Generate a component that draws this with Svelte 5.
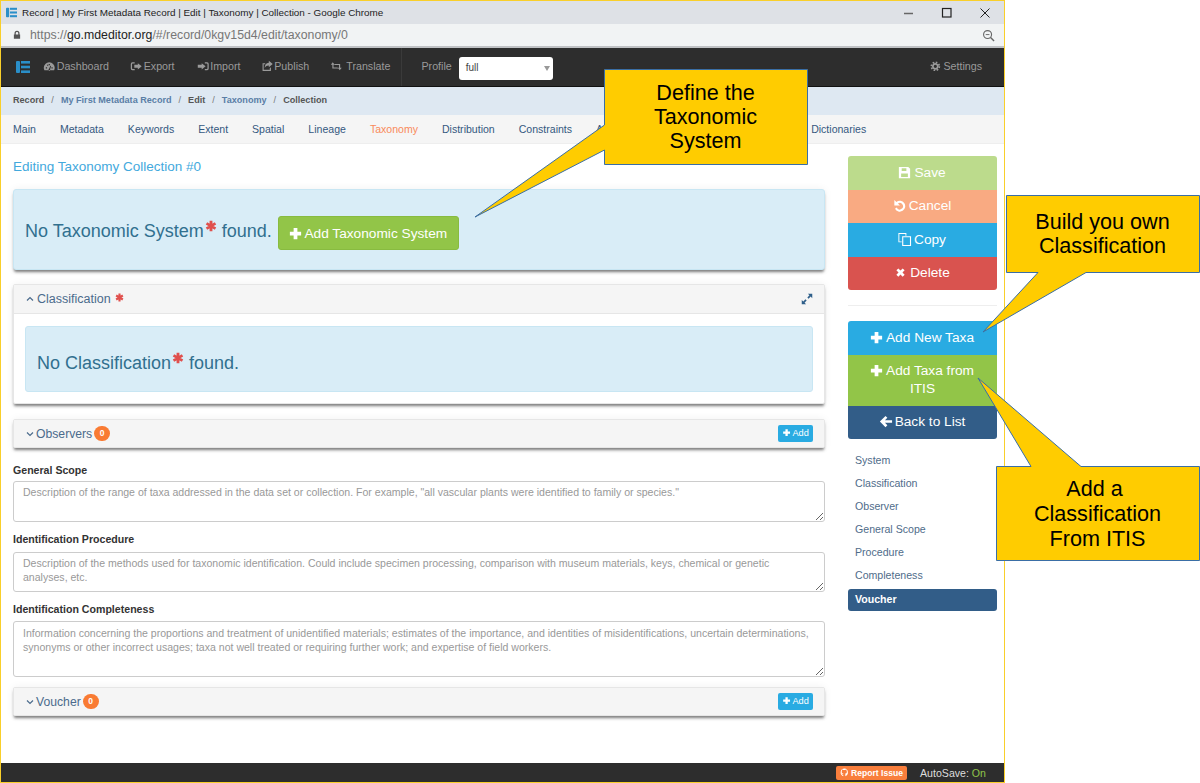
<script>
	const icons = {
		plus: 'M6 2h4v4h4v4h-4v4H6v-4H2V6h4z',
		times: 'M3.600 5.700 5.700 3.600 8 5.900l2.300-2.300 2.100 2.100L10.100 8l2.300 2.300-2.100 2.100L8 10.100l-2.300 2.300-2.100-2.100L5.900 8z',
		left: 'M8 2l2 2-2.600 2.600H15v2.800H7.400L10 12l-2 2-6-6z',
		save: 'M2 2h10l2 2v10H2zM5 3.400V6.500h5V3.400zM4.400 9v3.800h7.200V9z',
		undo: 'M2.500 2 4.700 4.200A5.800 5.800 0 1 1 3.200 11.500l1.800-1.300A3.500 3.500 0 1 0 6.300 5.800L8.500 8H2.500z',
		copy: 'M1.500 1h8.500v3H9V2H2.500v8H5v1H1.500zM5.500 4.500h9.500V15H5.500zM6.700 5.700v8.100H13.800V5.700z',
		dash: 'M8 3a7 7 0 0 0-7 7c0 1.200.3 2.300.8 3h12.400c.5-.7.8-1.800.8-3a7 7 0 0 0-7-7zM7.200 5h1.600v1.600H7.200zM3.600 9.200h1.600v1.600H3.600zm7.200 0h1.600v1.600h-1.600zM5 6.400l1-.6.9 1-1 .9zm2.500 5.400 2-4.600.9.4-1.400 4.400a1.200 1.200 0 1 1-1.500-.2z',
		exp: 'M6 3H3a2 2 0 0 0-2 2v6a2 2 0 0 0 2 2h3v-1.600H3.400a.8.8 0 0 1-.8-.8V5.400a.8.8 0 0 1 .8-.8H6zM10 4l5 4-5 4V9.800H5.500V6.200H10z',
		imp: 'M10 3h3a2 2 0 0 1 2 2v6a2 2 0 0 1-2 2h-3v-1.600h2.600a.8.8 0 0 0 .8-.8V5.400a.8.8 0 0 0-.8-.8H10zM6 4l5 4-5 4V9.800H1V6.200h5z',
		pub: 'M10 1l5 4.200-5 4.200V7C7 7 5.500 8 4.800 10.500 4.600 6.500 6.500 3.800 10 3.600zM2 4h3.400v1.500H3.400v7.100h7.800V10.400l1.500-1V14H2z',
		trans: 'M1 6 3.500 3 6 6H4.500v3.500H9.500L11 11H3V6zM15 10l-2.500 3L10 10h1.500V6.500H6.500L5 5h8v5z',
		expand: 'M9 2h5v5l-1.800-1.800L9.800 7.600 8.400 6.200l2.400-2.400zM7 14H2V9l1.800 1.800 2.400-2.400 1.400 1.400-2.400 2.400z',
		lock: 'M4 7V5a4 4 0 0 1 8 0v2h1v7H3V7zm2 0h4V5a2 2 0 0 0-4 0z',
		git: 'M8 1a7 7 0 0 0-2.200 13.600v-2.300c-2 .4-2.400-1-2.400-1-.3-.8-.8-1-.8-1-.6-.5 0-.5 0-.5.7 0 1.100.7 1.100.7.6 1.100 1.700.8 2.100.6 0-.5.2-.8.4-1-1.600-.2-3.200-.8-3.200-3.400 0-.8.3-1.400.7-1.900-.1-.2-.3-.9.1-1.900 0 0 .6-.2 2 .7a7 7 0 0 1 3.600 0c1.400-.9 2-.7 2-.7.4 1 .2 1.700.1 1.900.5.5.7 1.100.7 1.900 0 2.600-1.600 3.200-3.200 3.400.3.2.5.7.5 1.300v3.100A7 7 0 0 0 8 1z'
	}
	const tabs = ['Main', 'Metadata', 'Keywords', 'Extent', 'Spatial', 'Lineage', 'Taxonomy', 'Distribution', 'Constraints', 'Associated', 'Documents', 'Funding', 'Dictionaries']
	const menu = [
		{ name: 'Dashboard', icon: 'dash' },
		{ name: 'Export', icon: 'exp' },
		{ name: 'Import', icon: 'imp' },
		{ name: 'Publish', icon: 'pub' },
		{ name: 'Translate', icon: 'trans' }
	]
	const sections = ['System', 'Classification', 'Observer', 'General Scope', 'Procedure', 'Completeness', 'Voucher']
</script>

{#snippet ic(name)}
	<svg class="ic" viewBox="0 0 16 16"><path fill="currentColor" fill-rule="evenodd" d={icons[name]} /></svg>
{/snippet}

{#snippet star()}
	<svg class="star" viewBox="0 0 16 16"><path d="M8 1v14M2 4.500l12 7M14 4.500l-12 7" stroke="currentColor" stroke-width="3.800" /></svg>
{/snippet}

{#snippet gear()}
	<svg class="ic" viewBox="0 0 16 16">
		<circle cx="8" cy="8" r="6" fill="none" stroke="currentColor" stroke-width="2.600" stroke-dasharray="2.400 2.300" />
		<circle cx="8" cy="8" r="3.700" fill="none" stroke="currentColor" stroke-width="2.600" />
	</svg>
{/snippet}

{#snippet logo()}
	<svg class="logo" viewBox="0 0 14 14">
		<rect x="0" y="1" width="4" height="12" rx="1" fill="#2a8fc9" />
		<rect x="5" y="1" width="9" height="2.600" fill="#2a8fc9" />
		<rect x="5" y="5.700" width="9" height="2.600" fill="#2a8fc9" />
		<rect x="5" y="10.400" width="9" height="2.600" fill="#2a8fc9" />
	</svg>
{/snippet}

<div class="window">
	<div class="titlebar">
		{@render logo()}
		<span class="title">Record | My First Metadata Record | Edit | Taxonomy | Collection - Google Chrome</span>
		<div class="winbtns">
			<svg viewBox="0 0 12 12"><path d="M1 6.500h9" stroke="#666" stroke-width="1.500" /></svg>
			<svg viewBox="0 0 12 12"><rect x="1.500" y="1.500" width="8.500" height="8.500" fill="none" stroke="#222" stroke-width="1.200" /></svg>
			<svg viewBox="0 0 12 12"><path d="M1.500 1.500l9 9M10.500 1.500l-9 9" stroke="#222" stroke-width="1" /></svg>
		</div>
	</div>
	<div class="addr">
		{@render ic('lock')}
		<span class="url"><i>https://</i>go.mdeditor.org<i>/#/record/0kgv15d4/edit/taxonomy/0</i></span>
		<svg class="zoomout" viewBox="0 0 14 14"><circle cx="6" cy="6" r="4.300" fill="none" stroke="#666" stroke-width="1.200" /><path d="M9.200 9.200l3.800 3.800" stroke="#666" stroke-width="1.500" /><path d="M4 6h4" stroke="#666" /></svg>
	</div>

	<nav class="topnav">
		<span class="brand">{@render logo()}</span>
		{#each menu as m}
			<span class="menu-item {m.icon}">{@render ic(m.icon)}{m.name}</span>
		{/each}
		<span class="divider"></span>
		<span class="profile">Profile</span>
		<span class="select">full<b></b></span>
		<span class="settings">{@render gear()}Settings</span>
	</nav>

	<div class="crumbs">
		<span>Record</span><em>/</em><a>My First Metadata Record</a><em>/</em><span>Edit</span><em>/</em><a>Taxonomy</a><em>/</em><span>Collection</span>
	</div>

	<div class="tabs">
		{#each tabs as t}
			<span class:current={t === 'Taxonomy'}>{t}</span>
		{/each}
	</div>

	<div class="main">
		<div class="left">
			<h3>Editing Taxonomy Collection #0</h3>

			<div class="alert top-alert">
				<span>No Taxonomic System<span class="req">{@render star()}</span> found.</span>
				<button class="add-system">{@render ic('plus')}Add Taxonomic System</button>
			</div>

			<section class="card open">
				<header>
					<svg class="chev" viewBox="0 0 10 10"><path d="M2 6.500l3-3 3 3" fill="none" stroke="currentColor" stroke-width="1.200" /></svg>
					<span>Classification</span>
					<span class="req small">{@render star()}</span>
					<span class="expand">{@render ic('expand')}</span>
				</header>
				<div class="body">
					<div class="alert"><span>No Classification<span class="req">{@render star()}</span> found.</span></div>
				</div>
			</section>

			<section class="card closed">
				<header>
					<svg class="chev" viewBox="0 0 10 10"><path d="M2 3.500l3 3 3-3" fill="none" stroke="currentColor" stroke-width="1.200" /></svg>
					<span>Observers</span>
					<span class="count">0</span>
					<button class="add">{@render ic('plus')}Add</button>
				</header>
			</section>

			<label class="first">General Scope</label>
			<textarea class="h41" placeholder={'Description of the range of taxa addressed in the data set or collection. For example, "all vascular plants were identified to family or species."'}></textarea>

			<label class="second">Identification Procedure</label>
			<textarea class="h40" placeholder="Description of the methods used for taxonomic identification. Could include specimen processing, comparison with museum materials, keys, chemical or genetic analyses, etc."></textarea>

			<label>Identification Completeness</label>
			<textarea class="h56" placeholder="Information concerning the proportions and treatment of unidentified materials; estimates of the importance, and identities of misidentifications, uncertain determinations, synonyms or other incorrect usages; taxa not well treated or requiring further work; and expertise of field workers."></textarea>

			<section class="card closed voucher">
				<header>
					<svg class="chev" viewBox="0 0 10 10"><path d="M2 3.500l3 3 3-3" fill="none" stroke="currentColor" stroke-width="1.200" /></svg>
					<span>Voucher</span>
					<span class="count">0</span>
					<button class="add">{@render ic('plus')}Add</button>
				</header>
			</section>
		</div>

		<aside class="right">
			<div class="stack">
				<button class="save">{@render ic('save')}Save</button>
				<button class="cancel">{@render ic('undo')}Cancel</button>
				<button class="blue">{@render ic('copy')}Copy</button>
				<button class="del">{@render ic('times')}Delete</button>
			</div>
			<hr />
			<div class="stack">
				<button class="blue">{@render ic('plus')}Add New Taxa</button>
				<button class="green">{@render ic('plus')}Add Taxa from ITIS</button>
				<button class="navy">{@render ic('left')}Back to List</button>
			</div>
			<ul>
				{#each sections as s}
					<li class:active={s === 'Voucher'}>{s}</li>
				{/each}
			</ul>
		</aside>
	</div>

	<footer>
		<span class="report">{@render ic('git')}Report Issue</span>
		<span class="autosave">AutoSave: <b>On</b></span>
	</footer>
</div>

<svg class="shapes" viewBox="0 0 1200 783">
	<path d="M604.500 69.500H807.500V164.500H604.500V150L475 217 604.500 125Z" />
	<path d="M1006.500 195.500H1199.500V272.500H1086L983 332 1038 272.500H1006.500Z" />
	<path d="M996.500 466.500H1031L978 378 1081 466.500H1199.500V560.500H996.500Z" />
</svg>
<div class="note n1">Define the<br />Taxonomic<br />System</div>
<div class="note n2">Build you own<br />Classification</div>
<div class="note n3">Add a&nbsp;<br />Classification<br />From ITIS</div>

<style>
	:global(body) {
		margin: 0;
		background: #fff;
		font-family: "Liberation Sans", Arial, sans-serif;
	}
	.window {
		box-sizing: border-box;
		width: 1005px;
		height: 783px;
		border: 1px solid #f9cf2a;
		display: flex;
		flex-direction: column;
		background: #fff;
		overflow: hidden;
	}
	.ic {
		width: 1em;
		height: 1em;
		vertical-align: -0.12em;
		margin-right: 0.25em;
	}

	.titlebar {
		height: 23px;
		background: #dee1e6;
		display: flex;
		align-items: center;
		padding-left: 5px;
		flex: none;
	}
	.logo {
		width: 11px;
		height: 11px;
	}
	.title {
		margin-left: 5px;
		font-size: 9.900px;
		color: #222;
	}
	.winbtns {
		margin-left: auto;
		display: flex;
		gap: 26px;
		padding-right: 13px;
	}
	.winbtns svg {
		width: 12px;
		height: 12px;
	}
	.addr {
		height: 22px;
		background: #f1f3f4;
		border-bottom: 2px solid #bfc1c4;
		display: flex;
		align-items: center;
		padding-left: 11px;
		font-size: 12.300px;
		color: #555;
		flex: none;
	}
	.addr .ic {
		font-size: 10px;
		margin-right: 8px;
	}
	.url {
		color: #222;
	}
	.url i {
		font-style: normal;
		color: #777;
	}
	.zoomout {
		width: 13px;
		height: 13px;
		margin-left: auto;
		margin-right: 9px;
	}

	.topnav {
		height: 38px;
		background: #2d2d2d;
		border-bottom: 1px solid #111;
		display: flex;
		align-items: center;
		font-size: 10.700px;
		color: #9a9a9a;
		flex: none;
	}
	.brand {
		margin-left: 15px;
		display: flex;
	}
	.brand .logo {
		width: 14px;
		height: 14px;
	}
	.menu-item {
		margin-left: 13px;
		margin-right: 8px;
		padding-bottom: 2px;
		white-space: nowrap;
	}
	.menu-item .ic {
		width: 12.500px;
		height: 12.500px;
		vertical-align: -3px;
		margin-right: 1.200px;
	}
	.imp {
		margin-left: 14px;
	}
	.pub {
		margin-left: 12px;
	}
	.menu-item.trans .ic {
		margin-right: 3.500px;
	}
	.divider {
		width: 1px;
		height: 38px;
		background: #3a3a3a;
		margin-left: 3px;
	}
	.profile {
		margin-left: 19px;
		padding-bottom: 2px;
	}
	.select {
		box-sizing: border-box;
		width: 94px;
		height: 23px;
		margin-left: 7px;
		margin-top: 2px;
		background: #fff;
		border-radius: 3px;
		color: #444;
		font-size: 10px;
		line-height: 21px;
		padding-left: 7px;
		position: relative;
	}
	.select b {
		position: absolute;
		right: 3px;
		top: 9px;
		border: 3px solid transparent;
		border-top: 5px solid #999;
		border-bottom: 0;
	}
	.settings {
		margin-left: auto;
		margin-right: 22px;
		padding-bottom: 2px;
	}

	.crumbs {
		height: 28px;
		box-sizing: border-box;
		padding-bottom: 2px;
		background: #dee8f2;
		display: flex;
		align-items: center;
		padding-left: 12px;
		font-size: 9.100px;
		font-weight: bold;
		color: #555;
		flex: none;
	}
	.crumbs a {
		color: #5a7ea6;
	}
	.crumbs em {
		font-style: normal;
		font-weight: normal;
		margin: 0 7px;
		color: #777;
	}

	.tabs {
		height: 29px;
		box-sizing: border-box;
		background: #f5f5f5;
		border-bottom: 1px solid #eee;
		display: flex;
		align-items: center;
		gap: 24px;
		padding-left: 12px;
		font-size: 10.550px;
		color: #34587f;
		flex: none;
	}
	.tabs .current {
		color: #f98a5a;
	}

	.main {
		display: flex;
		gap: 23px;
		padding-left: 12px;
		flex: 1;
		min-height: 0;
	}
	.left {
		width: 812px;
		flex: none;
	}
	h3 {
		margin: 15px 0 14px;
		font-size: 13.500px;
		font-weight: normal;
		line-height: 16px;
		color: #43a9dd;
	}
	.alert {
		background: #d9edf7;
		border: 1px solid #c8e6f3;
		border-radius: 3px;
		color: #31708f;
		font-size: 18px;
		box-sizing: border-box;
		display: flex;
		align-items: center;
		white-space: pre;
		padding-left: 11px;
	}
	.top-alert {
		height: 81px;
		box-shadow: 0 3px 3px -1px rgba(0, 0, 0, 0.5), 0 0 8px rgba(0, 0, 0, 0.06);
		gap: 6px;
		padding-top: 3px;
	}
	.req {
		color: #e0504d;
	}
	.star {
		width: 12px;
		height: 12px;
		vertical-align: 5px;
		margin-left: 1px;
	}
	.req.small {
		margin-left: 4px;
		display: flex;
	}
	.req.small .star {
		width: 9px;
		height: 9px;
		margin: 0 0 4px;
	}
	.add-system {
		width: 181px;
		height: 34px;
		background: #92c548;
		border: 1px solid #88bb40;
		border-radius: 3px;
		color: #fff;
		font: 13.700px "Liberation Sans", Arial, sans-serif;
		padding: 0;
		margin-top: 4px;
	}
	.add-system .ic {
		width: 15px;
		height: 15px;
		vertical-align: -3px;
		margin: 0 1px 0 -1px;
	}

	.card {
		margin-top: 14px;
		border: 1px solid #e6e6e6;
		border-radius: 2px;
		box-shadow: 0 3px 3px -1px rgba(0, 0, 0, 0.5), 0 0 8px rgba(0, 0, 0, 0.06);
		background: #fff;
	}
	.card header {
		height: 29px;
		box-sizing: border-box;
		background: #f5f5f5;
		border-bottom: 1px solid #e6e6e6;
		display: flex;
		align-items: center;
		padding: 0 11px;
		font-size: 12.200px;
		color: #4b6b8c;
	}
	.open header {
		font-size: 12.500px;
	}
	.card + .card {
		margin-top: 15px;
	}
	.chev {
		width: 10px;
		height: 10px;
		margin-right: 1px;
	}
	.open .chev {
		margin-right: 2px;
	}
	.expand {
		margin-left: auto;
		margin-right: -1px;
		color: #2f5f8a;
		font-size: 14px;
	}
	.expand .ic {
		margin: 0;
		display: block;
	}
	.body {
		padding: 12px 11px 11px;
	}
	.body .alert {
		height: 66px;
		padding-top: 7px;
	}
	.closed header {
		height: 27px;
		border-bottom: 0;
	}
	.count {
		width: 16px;
		height: 15px;
		border-radius: 8px;
		background: #f97b33;
		color: #fff;
		font-size: 8.500px;
		font-weight: bold;
		text-align: center;
		line-height: 15px;
		margin-left: 2px;
	}
	.add {
		margin-left: auto;
		height: 17px;
		width: 35px;
		padding: 0;
		background: #29abe2;
		border: 0;
		border-radius: 2px;
		color: #fff;
		font: 9.200px "Liberation Sans", Arial, sans-serif;
	}
	.add .ic {
		margin-right: 1px;
	}

	label {
		display: block;
		font-size: 10.600px;
		font-weight: bold;
		color: #333;
		line-height: 14px;
		margin: 10px 0 5px;
	}
	label.first {
		margin: 15px 0 4px;
	}
	label.second {
		margin-bottom: 6px;
	}
	textarea {
		display: block;
		box-sizing: border-box;
		width: 812px;
		margin: 0;
		border: 1px solid #ccc;
		border-radius: 3px;
		padding: 3px 9px;
		font: 10.560px/14px "Liberation Sans", Arial, sans-serif;
		background: #fff;
	}
	textarea::placeholder {
		color: #999;
		opacity: 1;
	}
	.h41 {
		height: 41px;
	}
	.h40 {
		height: 40px;
	}
	.h56 {
		height: 56px;
		padding-top: 4px;
	}
	.voucher {
		margin-top: 10px;
	}

	.right {
		width: 149px;
		flex: none;
		padding-top: 12px;
	}
	.stack {
		display: flex;
		flex-direction: column;
		border-radius: 3px;
		overflow: hidden;
	}
	.stack button {
		border: 0;
		padding: 7.500px 12px;
		font: 13.700px/18px "Liberation Sans", Arial, sans-serif;
		color: #fff;
		min-height: 33.500px;
	}
	.stack .ic {
		width: 15px;
		height: 15px;
		vertical-align: -3px;
		margin: 0 2px 0 -2px;
	}
	.save { background: #bcdb8c; }
	.cancel { background: #f9aa82; }
	.blue { background: #29abe2; }
	.del { background: #d9534f; }
	.green { background: #92c548; }
	.navy { background: #325d88; }
	hr {
		border: 0;
		border-top: 1px solid #eee;
		margin: 15px 0;
	}
	ul {
		list-style: none;
		margin: 10px 0 0;
		padding: 0;
		font-size: 10.600px;
		color: #4f6c8a;
	}
	li {
		line-height: 23px;
		padding-left: 7px;
	}
	li.active {
		background: #325d88;
		color: #fff;
		font-weight: bold;
		border-radius: 3px;
		line-height: 20px;
		padding-bottom: 2px;
		margin-top: 2px;
	}

	footer {
		height: 19px;
		background: #2d2d2d;
		flex: none;
		display: flex;
		align-items: center;
		justify-content: flex-end;
		padding-right: 18px;
		font-size: 10.600px;
		color: #ddd;
	}
	.report {
		background: #f97e3c;
		color: #fff;
		font-size: 8.600px;
		font-weight: bold;
		height: 14px;
		line-height: 14px;
		padding: 0 4px;
		border-radius: 2px;
		margin-right: 13px;
	}
	.report .ic {
		margin-right: 2px;
		font-size: 9px;
	}
	.autosave b {
		font-weight: normal;
		color: #8fc34a;
	}

	.shapes {
		position: absolute;
		left: 0;
		top: 0;
		width: 1200px;
		height: 783px;
		pointer-events: none;
	}
	.shapes path {
		fill: #ffcc00;
		stroke: #3a6ea5;
		stroke-width: 1;
	}
	.note {
		position: absolute;
		font-size: 21.600px;
		line-height: 24px;
		color: #000;
		text-align: center;
	}
	.n1 { left: 604px; top: 81px; width: 203px; }
	.n2 { left: 1006px; top: 210px; width: 193px; }
	.n3 { left: 996px; top: 476px; width: 203px; line-height: 25px; }
</style>
